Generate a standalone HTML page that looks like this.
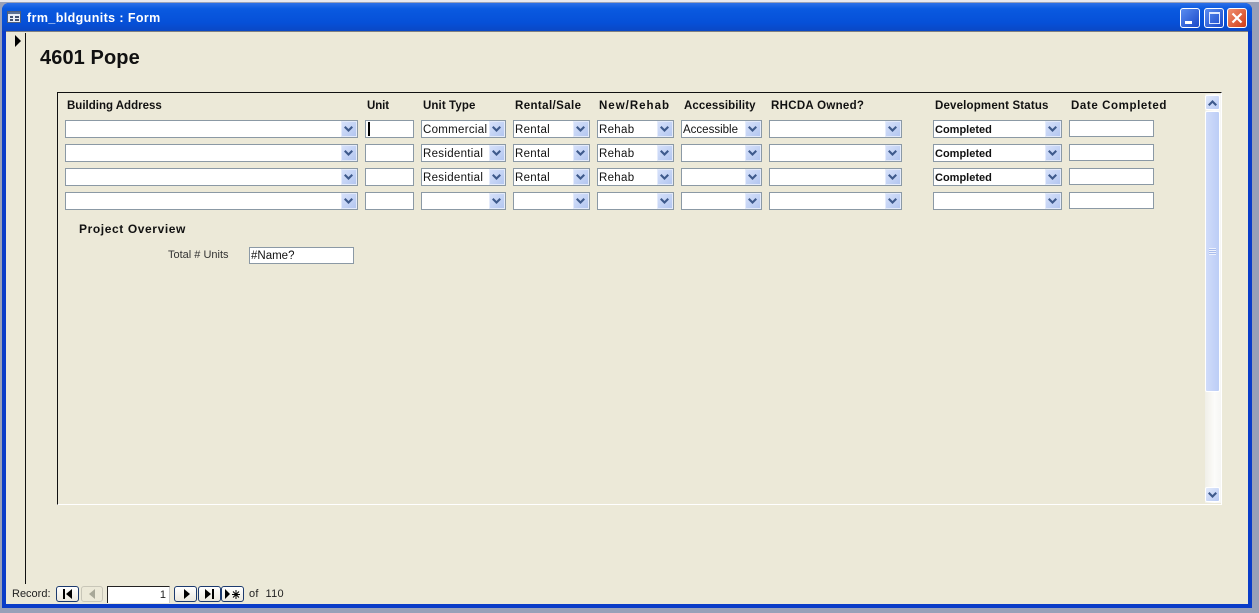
<!DOCTYPE html>
<html><head><meta charset="utf-8">
<style>
html,body{margin:0;padding:0;width:1259px;height:613px;overflow:hidden;background:#98a0b8;font-family:"Liberation Sans",sans-serif}
.a,.f,.c,.b,.h,.t{position:absolute}
.f,.c{background:#fff;border:1px solid #8b99a5;box-sizing:border-box;height:18px;font-size:11.5px;letter-spacing:.3px;line-height:16px;padding-left:1px;color:#111;white-space:nowrap;overflow:hidden}
.c{line-height:18px}
.f{height:17px}
.c b{font-size:11px;letter-spacing:0}
.b{width:16px;height:16px;top:0;right:0;box-sizing:border-box;border:1px solid #e4ebfb;background:linear-gradient(135deg,#d6e1fa,#b3c6f0)}
.b svg{position:absolute;left:2px;top:4px}
.h{font-size:11.5px;font-weight:bold;color:#111;top:100px;white-space:nowrap}
.t{font-size:11px;color:#222;white-space:nowrap}
.n{position:absolute;top:586px;height:16px;width:23px;box-sizing:border-box;border:1px solid #1c3a6e;border-radius:3px;background:linear-gradient(#fff,#ece9de)}
</style></head><body>
<svg width="0" height="0" style="position:absolute"><defs><path id="v" d="M0 1.5L1.5 0L4.5 3L7.5 0L9 1.5L4.5 6Z" fill="#3e5a8c"/></defs></svg>
<div class="a" style="left:0;top:0;width:1259px;height:2px;background:#e8e8ee"></div>
<div class="a" style="left:2px;top:3px;width:1250px;height:605px;background:#0a3cc8;border-radius:7px 7px 0 0"></div>
<div class="a" style="left:2px;top:3px;width:1250px;height:28px;border-radius:7px 7px 0 0;background:linear-gradient(#2c70e8,#0a5ae0 20%,#0650d8 70%,#0a48c4)"></div>
<svg class="a" style="left:7px;top:11px" width="15" height="13"><rect x=".5" y=".5" width="13" height="11" fill="#e8edf5" stroke="#50607c"/><rect x="1" y="1" width="12" height="2" fill="#5a7094"/><rect x="3" y="5" width="3" height="2" fill="#405070"/><rect x="3" y="8" width="3" height="2" fill="#405070"/><rect x="8" y="5" width="4" height="2" fill="#405070"/><rect x="8" y="8" width="4" height="2" fill="#405070"/></svg>
<div class="a" style="left:27px;top:11px;font-size:12.5px;font-weight:bold;color:#fff;letter-spacing:.4px;white-space:nowrap">frm_bldgunits : Form</div>
<div class="a" style="left:1180px;top:8px;width:20px;height:20px;box-sizing:border-box;border:1px solid #fff;border-radius:3px;background:linear-gradient(135deg,#5a8cf0,#1a48c8)"><div class="a" style="left:4px;top:12px;width:7px;height:3px;background:#fff"></div></div>
<div class="a" style="left:1204px;top:8px;width:20px;height:20px;box-sizing:border-box;border:1px solid #fff;border-radius:3px;background:linear-gradient(135deg,#5a8cf0,#1a48c8)"><div class="a" style="left:4px;top:3px;width:11px;height:12px;box-sizing:border-box;border:1px solid #dfe8ff;border-top:2px solid #dfe8ff"></div></div>
<div class="a" style="left:1227px;top:8px;width:20px;height:20px;box-sizing:border-box;border:1px solid #fff;border-radius:3px;background:linear-gradient(135deg,#f09070,#d03c18)"><svg class="a" style="left:3px;top:3px" width="12" height="12"><path d="M1.5 1.5L10.5 10.5M10.5 1.5L1.5 10.5" stroke="#fff" stroke-width="2.2"/></svg></div>

<div class="a" style="left:6px;top:31px;width:1242px;height:573px;background:#ece9d8;border-top:1px solid #808080;box-sizing:border-box"></div>
<div class="a" style="left:25px;top:33px;width:1px;height:551px;background:#111"></div>
<svg class="a" style="left:14px;top:35px" width="8" height="12"><path d="M1 0L7 6L1 12Z" fill="#000"/></svg>
<div class="a" style="left:40px;top:47px;font-size:20px;font-weight:bold;color:#111;white-space:nowrap;letter-spacing:.1px">4601 Pope</div>

<div class="a" style="left:57px;top:92px;width:1165px;height:413px;box-sizing:border-box;border-top:1px solid #111;border-left:1px solid #111;border-right:1px solid #fff;border-bottom:1px solid #fff"></div>

<div class="h" style="left:67px">Building Address</div>
<div class="h" style="left:367px;letter-spacing:-.1px">Unit</div>
<div class="h" style="left:423px;letter-spacing:.1px">Unit Type</div>
<div class="h" style="left:515px;letter-spacing:.4px">Rental/Sale</div>
<div class="h" style="left:599px;letter-spacing:1px">New/Rehab</div>
<div class="h" style="left:684px;letter-spacing:.1px">Accessibility</div>
<div class="h" style="left:771px;letter-spacing:.3px">RHCDA Owned?</div>
<div class="h" style="left:935px;letter-spacing:.17px">Development Status</div>
<div class="h" style="left:1071px;letter-spacing:.6px">Date Completed</div>

<!-- row 1 -->
<div class="c" style="left:65px;top:120px;width:293px"><span class="b"><svg width="9" height="6"><use href="#v"/></svg></span></div>
<div class="f" style="left:365px;top:120px;width:49px;height:18px"><div class="a" style="left:2px;top:1px;width:2px;height:14px;background:#000"></div></div>
<div class="c" style="left:421px;top:120px;width:85px">Commercial<span class="b"><svg width="9" height="6"><use href="#v"/></svg></span></div>
<div class="c" style="left:513px;top:120px;width:77px">Rental<span class="b"><svg width="9" height="6"><use href="#v"/></svg></span></div>
<div class="c" style="left:597px;top:120px;width:77px">Rehab<span class="b"><svg width="9" height="6"><use href="#v"/></svg></span></div>
<div class="c" style="left:681px;top:120px;width:81px;letter-spacing:0">Accessible<span class="b"><svg width="9" height="6"><use href="#v"/></svg></span></div>
<div class="c" style="left:769px;top:120px;width:133px"><span class="b"><svg width="9" height="6"><use href="#v"/></svg></span></div>
<div class="c" style="left:933px;top:120px;width:129px"><b>Completed</b><span class="b"><svg width="9" height="6"><use href="#v"/></svg></span></div>
<div class="f" style="left:1069px;top:120px;width:85px"></div>
<!-- row 2 -->
<div class="c" style="left:65px;top:144px;width:293px"><span class="b"><svg width="9" height="6"><use href="#v"/></svg></span></div>
<div class="f" style="left:365px;top:144px;width:49px;height:18px"></div>
<div class="c" style="left:421px;top:144px;width:85px">Residential<span class="b"><svg width="9" height="6"><use href="#v"/></svg></span></div>
<div class="c" style="left:513px;top:144px;width:77px">Rental<span class="b"><svg width="9" height="6"><use href="#v"/></svg></span></div>
<div class="c" style="left:597px;top:144px;width:77px">Rehab<span class="b"><svg width="9" height="6"><use href="#v"/></svg></span></div>
<div class="c" style="left:681px;top:144px;width:81px"><span class="b"><svg width="9" height="6"><use href="#v"/></svg></span></div>
<div class="c" style="left:769px;top:144px;width:133px"><span class="b"><svg width="9" height="6"><use href="#v"/></svg></span></div>
<div class="c" style="left:933px;top:144px;width:129px"><b>Completed</b><span class="b"><svg width="9" height="6"><use href="#v"/></svg></span></div>
<div class="f" style="left:1069px;top:144px;width:85px"></div>
<!-- row 3 -->
<div class="c" style="left:65px;top:168px;width:293px"><span class="b"><svg width="9" height="6"><use href="#v"/></svg></span></div>
<div class="f" style="left:365px;top:168px;width:49px;height:18px"></div>
<div class="c" style="left:421px;top:168px;width:85px">Residential<span class="b"><svg width="9" height="6"><use href="#v"/></svg></span></div>
<div class="c" style="left:513px;top:168px;width:77px">Rental<span class="b"><svg width="9" height="6"><use href="#v"/></svg></span></div>
<div class="c" style="left:597px;top:168px;width:77px">Rehab<span class="b"><svg width="9" height="6"><use href="#v"/></svg></span></div>
<div class="c" style="left:681px;top:168px;width:81px"><span class="b"><svg width="9" height="6"><use href="#v"/></svg></span></div>
<div class="c" style="left:769px;top:168px;width:133px"><span class="b"><svg width="9" height="6"><use href="#v"/></svg></span></div>
<div class="c" style="left:933px;top:168px;width:129px"><b>Completed</b><span class="b"><svg width="9" height="6"><use href="#v"/></svg></span></div>
<div class="f" style="left:1069px;top:168px;width:85px"></div>
<!-- row 4 -->
<div class="c" style="left:65px;top:192px;width:293px"><span class="b"><svg width="9" height="6"><use href="#v"/></svg></span></div>
<div class="f" style="left:365px;top:192px;width:49px;height:18px"></div>
<div class="c" style="left:421px;top:192px;width:85px"><span class="b"><svg width="9" height="6"><use href="#v"/></svg></span></div>
<div class="c" style="left:513px;top:192px;width:77px"><span class="b"><svg width="9" height="6"><use href="#v"/></svg></span></div>
<div class="c" style="left:597px;top:192px;width:77px"><span class="b"><svg width="9" height="6"><use href="#v"/></svg></span></div>
<div class="c" style="left:681px;top:192px;width:81px"><span class="b"><svg width="9" height="6"><use href="#v"/></svg></span></div>
<div class="c" style="left:769px;top:192px;width:133px"><span class="b"><svg width="9" height="6"><use href="#v"/></svg></span></div>
<div class="c" style="left:933px;top:192px;width:129px"><span class="b"><svg width="9" height="6"><use href="#v"/></svg></span></div>
<div class="f" style="left:1069px;top:192px;width:85px"></div>

<div class="a" style="left:79px;top:222px;font-size:12px;font-weight:bold;color:#111;letter-spacing:.6px;white-space:nowrap">Project Overview</div>
<div class="t" style="left:168px;top:249px;color:#333">Total # Units</div>
<div class="f" style="left:249px;top:247px;width:105px;height:17px;letter-spacing:0">#Name?</div>

<!-- scrollbar -->
<div class="a" style="left:1205px;top:94px;width:16px;height:409px;background:linear-gradient(90deg,#f0efe8,#fcfcfa 60%,#f6f6f4)"></div>
<div class="a" style="left:1205px;top:95px;width:15px;height:15px;box-sizing:border-box;border:1px solid #fff;border-radius:2px;background:linear-gradient(135deg,#e2eafc,#b8caf4)"><svg class="a" style="left:2px;top:4px" width="9" height="6"><path d="M0 4.5L1.5 6L4.5 3L7.5 6L9 4.5L4.5 0Z" fill="#3e5a8c"/></svg></div>
<div class="a" style="left:1205px;top:111px;width:15px;height:281px;box-sizing:border-box;border:1px solid #fff;border-radius:2px;background:linear-gradient(90deg,#d0dcfa,#bccdf6)"></div>
<div class="a" style="left:1209px;top:248px;width:7px;height:7px;background:repeating-linear-gradient(#eef2fd 0 1px,#a8bcec 1px 2px)"></div>
<div class="a" style="left:1205px;top:487px;width:15px;height:15px;box-sizing:border-box;border:1px solid #fff;border-radius:2px;background:linear-gradient(135deg,#e2eafc,#b8caf4)"><svg class="a" style="left:2px;top:4px" width="9" height="6"><use href="#v"/></svg></div>

<!-- nav -->
<div class="t" style="left:12px;top:588px;color:#222">Record:</div>
<div class="n" style="left:56px"><svg class="a" style="left:5px;top:2px" width="12" height="10"><rect x="1" y="0" width="2" height="10" fill="#000"/><path d="M10 0L4 5L10 10Z" fill="#000"/></svg></div>
<div class="n" style="left:81px;width:22px;border-color:#c8c6b8;background:#ece9d8"><svg class="a" style="left:5px;top:2px" width="11" height="10"><path d="M8 0L2 5L8 10Z" fill="#a8a898"/></svg></div>
<div class="a" style="left:107px;top:586px;width:63px;height:17px;box-sizing:border-box;background:#fff;border-top:1px solid #222;border-left:1px solid #222;border-right:1px solid #ccc;font-size:11px;text-align:right;padding-right:3px;line-height:17px;color:#222">1</div>
<div class="n" style="left:174px"><svg class="a" style="left:7px;top:2px" width="11" height="10"><path d="M2 0L8 5L2 10Z" fill="#000"/></svg></div>
<div class="n" style="left:198px"><svg class="a" style="left:5px;top:2px" width="12" height="10"><path d="M1 0L7 5L1 10Z" fill="#000"/><rect x="8" y="0" width="2" height="10" fill="#000"/></svg></div>
<div class="n" style="left:221px"><svg class="a" style="left:2px;top:2px" width="18" height="10"><path d="M1 0L6 5L1 10Z" fill="#000"/><path d="M12 1V10M8 5.5H16M9 2.5L15 8.5M15 2.5L9 8.5" stroke="#000" stroke-width="1"/></svg></div>
<div class="t" style="left:249px;top:588px;color:#222;letter-spacing:.3px">of&nbsp; 110</div>
</body></html>
